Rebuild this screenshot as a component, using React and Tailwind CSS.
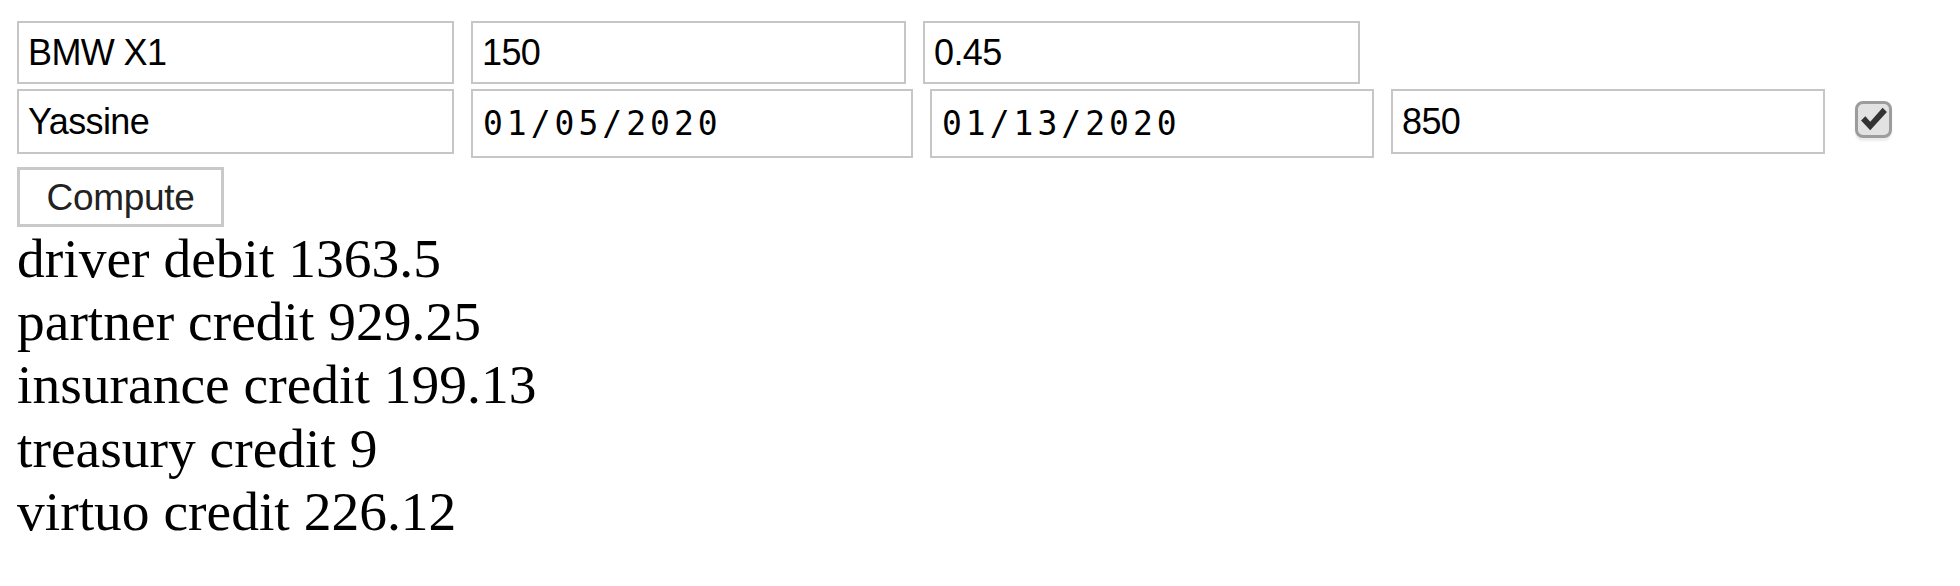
import { useState } from "react";

function App() {
    const [car, setCar] = useState("BMW X1");
    const [price, setPrice] = useState("150");
    const [rate, setRate] = useState("0.45");
    const [driver, setDriver] = useState("Yassine");
    const [start, setStart] = useState("01/05/2020");
    const [end, setEnd] = useState("01/13/2020");
    const [km, setKm] = useState("850");
    const [checked, setChecked] = useState(true);

    const results = [
        ["driver debit", "1363.5"],
        ["partner credit", "929.25"],
        ["insurance credit", "199.13"],
        ["treasury credit", "9"],
        ["virtuo credit", "226.12"],
    ];

    const textInput = "h-[63px] border-2 border-[#c6c6c6] bg-white pl-[9px] text-[36px] tracking-[-0.6px] text-black outline-none font-['Liberation_Sans',Arial,sans-serif]";
    const dateInput = "h-[69px] border-2 border-[#c6c6c6] bg-white pl-[10px] text-[33px] tracking-[4px] text-black outline-none font-['DejaVu_Sans_Mono',monospace]";

    return (
        <div className="min-h-screen bg-white pl-[17px] pt-[21px]">
            {/* first row */}
            <div className="flex gap-[17px]">
                <input value={car} onChange={(e) => setCar(e.target.value)} className={textInput + " w-[437px]"} />
                <input value={price} onChange={(e) => setPrice(e.target.value)} className={textInput + " w-[435px]"} />
                <input value={rate} onChange={(e) => setRate(e.target.value)} className={textInput + " w-[437px]"} />
            </div>

            {/* second row */}
            <div className="mt-[5px] flex items-start gap-[17px]">
                <input value={driver} onChange={(e) => setDriver(e.target.value)} className={textInput + " h-[65px] w-[437px]"} />
                <input value={start} onChange={(e) => setStart(e.target.value)} className={dateInput + " w-[442px]"} />
                <input value={end} onChange={(e) => setEnd(e.target.value)} className={dateInput + " w-[444px]"} />
                <input value={km} onChange={(e) => setKm(e.target.value)} className={textInput + " h-[65px] w-[434px]"} />
                <button
                onClick={() => setChecked(!checked)}
                className="ml-[13px] mt-[12px] flex h-[37px] w-[37px] items-center justify-center rounded-[8px] border-[3px] border-[#9c9c9c] bg-[#e2e2e2] shadow-[0_3px_2px_rgba(0,0,0,0.08)]"
                >
                    {checked && (
                        <svg width="28" height="27" viewBox="0 0 26 24">
                            <path d="M1 13 L5 9 L9.5 14 L21 1 L25 5 L9.5 22 Z" fill="#333" />
                        </svg>
                    )}
                </button>
            </div>

            <button className="mt-[9px] block h-[60px] w-[207px] border-[3px] border-[#c9c9c9] bg-white text-[37px] tracking-[-0.3px] text-[#222] font-['Liberation_Sans',Arial,sans-serif]">
                Compute
            </button>

            {/* results */}
            <div className="text-[55.5px] leading-[63.2px] text-black font-['Liberation_Serif','Times_New_Roman',serif]">
                {results.map(([label, value]) => (
                    <div key={label}>{label} {value}</div>
                ))}
            </div>
        </div>
    );
}

export default App;
